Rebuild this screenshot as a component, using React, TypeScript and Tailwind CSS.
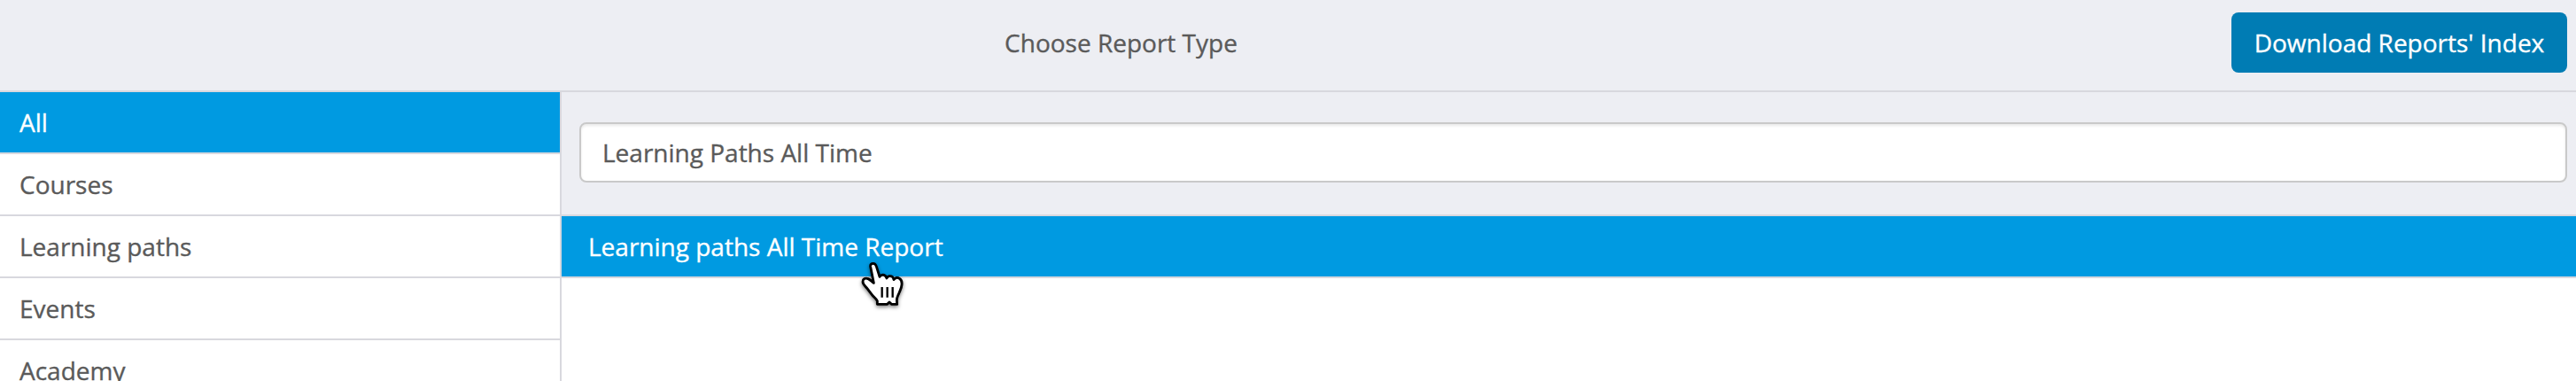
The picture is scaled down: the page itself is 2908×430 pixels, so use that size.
import React from 'react';

interface CategoryProps {
  label: string;
  active?: boolean;
}

const categories = ['All', 'Courses', 'Learning paths', 'Events', 'Academy'];

const Category: React.FC<CategoryProps> = ({ label, active }) => (
  <li
    className={`h-[70px] shrink-0 border-b-2 border-[#d8d8de] pl-[22px] leading-[68px] ${
      active ? 'bg-[#009ae1] text-white' : 'bg-white'
    }`}
  >
    {label}
  </li>
);

const HandCursor = () => (
  <svg
    className="absolute left-[336px] top-[49px] z-10 h-[60px] w-[55px] overflow-visible drop-shadow-[0_2px_2px_rgba(0,0,0,0.5)]"
    viewBox="60 39 165 180"
    fill="none"
  >
    <path
      d="M98 63C97 56 101 52 107 52C113 52 116 56 118 62L129 97C132 90 142 89 147 93C151 96 152 99 153 102C156 94 167 93 172 97C175 99 176 103 177 107C181 99 191 99 196 103C203 107 205 115 204 124C203 137 198 144 194 154C190 163 187 167 187 176L188 190H169L162 183L155 190H121V179C116 169 110 167 103 158L87 137C81 129 72 123 72 114C72 104 81 100 90 104C97 107 102 113 109 118Z"
      fill="#fff"
      stroke="#000"
      strokeWidth="8.5"
      strokeLinejoin="round"
    />
    <path d="M137 132V167M155 132V167M173 132V167" stroke="#000" strokeWidth="7" />
  </svg>
);

const App: React.FC = () => {
  return (
    <div className="flex h-[430px] w-full flex-col overflow-hidden bg-white font-['Open_Sans',sans-serif] text-[28px] text-[#5a5a5a] [-webkit-text-stroke:0.35px]">
      <header className="flex h-[104px] shrink-0 items-start border-b-2 border-[#d8d8de] bg-[#edeef3] pr-2.5 pt-3.5">
        <h1 className="flex-1 pl-3 text-center leading-[68px]">Choose Report Type</h1>
        <button className="h-[68px] w-[379px] rounded-lg bg-[#007cb4] text-white">
          Download Reports' Index
        </button>
      </header>

      <div className="flex min-h-0 flex-1">
        <ul className="flex w-[634px] shrink-0 flex-col overflow-hidden border-r-2 border-[#d8d8de]">
          {categories.map((label) => (
            <Category key={label} label={label} active={label === 'All'} />
          ))}
        </ul>

        <main className="flex-1">
          <div className="h-[140px] border-b-2 border-[#d8d8de] bg-[#edeef3] pl-5 pr-2.5 pt-[34px]">
            <input
              type="text"
              defaultValue="Learning Paths All Time"
              className="block h-[68px] w-full rounded-lg border-2 border-[#c9c9c9] bg-white px-6 shadow-[inset_0_2px_3px_rgba(0,0,0,0.09)] outline-none"
            />
          </div>
          <div className="relative h-[70px] border-b-2 border-[#d8d8de] bg-[#009ae1] pl-[30px] leading-[68px] text-white">
            Learning paths All Time Report
            <HandCursor />
          </div>
        </main>
      </div>
    </div>
  );
};

export default App;
